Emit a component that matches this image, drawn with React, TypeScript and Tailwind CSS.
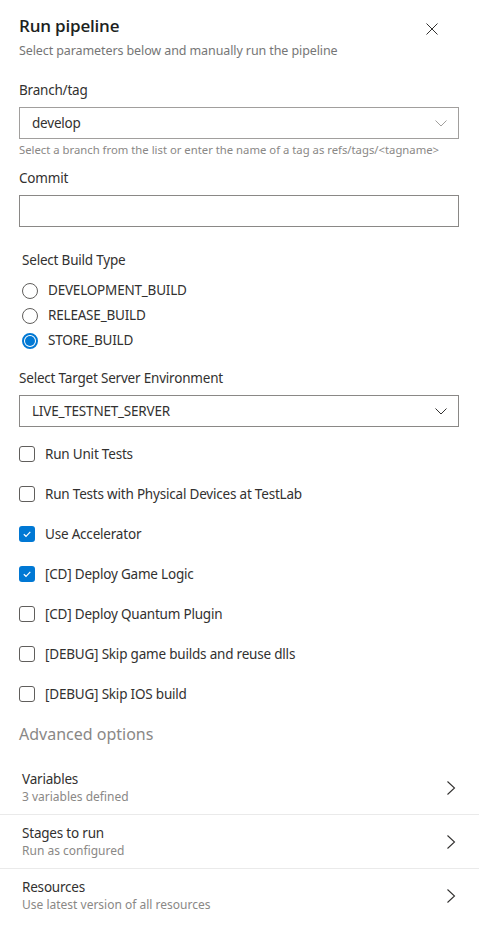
import React from "react";

const font = { fontFamily: '"Noto Sans", "Open Sans", sans-serif' };

function Checkbox({ checked, label }: { checked?: boolean; label: string }) {
  return (
    <div className="flex items-center h-10">
      {checked ? (
        <div className="w-4 h-4 rounded-[3px] bg-[#0078d4] flex items-center justify-center">
          <svg width="10" height="10" viewBox="0 0 10 10">
            <path d="M1.8 5.2 L4 7.3 L8.3 2.8" fill="none" stroke="white" strokeWidth="1.2" />
          </svg>
        </div>
      ) : (
        <div className="w-4 h-4 rounded-[3px] border border-[#605e5c] bg-white" />
      )}
      <span className="ml-[10px] text-[13.5px] tracking-[-0.2px] text-[#323130]">{label}</span>
    </div>
  );
}

function Radio({ checked, label }: { checked?: boolean; label: string }) {
  return (
    <div className="flex items-center h-[25px]">
      {checked ? (
        <div className="w-4 h-4 rounded-full border-2 border-[#0078d4] flex items-center justify-center">
          <div className="w-[10px] h-[10px] rounded-full bg-[#0078d4]" />
        </div>
      ) : (
        <div className="w-4 h-4 rounded-full border border-[#605e5c]" />
      )}
      <span className="ml-[10px] text-[13.5px] tracking-[-0.2px] text-[#323130]">{label}</span>
    </div>
  );
}

function Row({ title, sub, last }: { title: string; sub: string; last?: boolean }) {
  return (
    <div className={`flex items-center justify-between h-[54px] pl-[22px] pr-[23px] ${last ? "" : "border-b border-[#eaeaea]"}`}>
      <div className="flex flex-col">
        <span className="text-[13.5px] tracking-[-0.2px] leading-[18px] text-[#323130]">{title}</span>
        <span className="text-[12px] leading-[18px] text-[#8a8886]">{sub}</span>
      </div>
      <svg width="10" height="16" viewBox="0 0 10 16">
        <path d="M1.5 1.5 L8.5 8 L1.5 14.5" fill="none" stroke="#323130" strokeWidth="1.1" />
      </svg>
    </div>
  );
}

export default function App() {
  return (
    <div className="w-[479px] h-[937px] bg-white overflow-hidden" style={font}>
      <div className="pl-[19px] pr-[20px]">
        <div className="flex justify-between pt-[14px]">
          <div>
            <div
              className="text-[17px] leading-[24px] font-semibold tracking-[-0.2px] text-[#201f1e]"
              style={{ fontFamily: '"Open Sans", "Noto Sans", sans-serif' }}
            >
              Run pipeline
            </div>
            <div className="text-[12.5px] leading-[18px] tracking-[-0.1px] text-[#767676] mt-[4px]">
              Select parameters below and manually run the pipeline
            </div>
          </div>
          <svg width="12" height="12" viewBox="0 0 12 12" className="mt-[9px] mr-[21px]">
            <path d="M0.5 0.5 L11.5 11.5 M11.5 0.5 L0.5 11.5" stroke="#323130" strokeWidth="1" />
          </svg>
        </div>

        <div className="text-[13.5px] tracking-[-0.2px] leading-[20px] text-[#323130] mt-[20px]">Branch/tag</div>
        <div className="mt-[7px] h-[32px] border border-[#a19f9d] flex items-center justify-between pl-[12px] pr-[11px]">
          <span className="text-[13.5px] tracking-[-0.2px] text-[#323130]">develop</span>
          <svg width="12" height="7" viewBox="0 0 12 7">
            <path d="M0.5 0.5 L6 6 L11.5 0.5" fill="none" stroke="#a19f9d" strokeWidth="1" />
          </svg>
        </div>
        <div className="text-[11.3px] leading-[16px] text-[#8a8886] mt-[3px] whitespace-nowrap">
          Select a branch from the list or enter the name of a tag as refs/tags/&lt;tagname&gt;
        </div>

        <div className="text-[13.5px] tracking-[-0.2px] leading-[20px] text-[#323130] mt-[10px]">Commit</div>
        <div className="mt-[7px] h-[32px] border border-[#8a8886]" />

        <div className="pl-[3px] mt-[23px]">
          <div className="text-[13.5px] tracking-[-0.2px] leading-[20px] text-[#323130]">Select Build Type</div>
          <div className="mt-[8px]">
            <Radio label="DEVELOPMENT_BUILD" />
            <Radio label="RELEASE_BUILD" />
            <Radio checked label="STORE_BUILD" />
          </div>
        </div>

        <div className="text-[13.5px] tracking-[-0.2px] leading-[20px] text-[#323130] mt-[15px]">Select Target Server Environment</div>
        <div className="mt-[7px] h-[32px] border border-[#8a8886] flex items-center justify-between pl-[12px] pr-[11px]">
          <span className="text-[13.5px] tracking-[-0.2px] text-[#323130]">LIVE_TESTNET_SERVER</span>
          <svg width="12" height="7" viewBox="0 0 12 7">
            <path d="M0.5 0.5 L6 6 L11.5 0.5" fill="none" stroke="#323130" strokeWidth="1" />
          </svg>
        </div>

        <div className="mt-[7px]">
          <Checkbox label="Run Unit Tests" />
          <Checkbox label="Run Tests with Physical Devices at TestLab" />
          <Checkbox checked label="Use Accelerator" />
          <Checkbox checked label="[CD] Deploy Game Logic" />
          <Checkbox label="[CD] Deploy Quantum Plugin" />
          <Checkbox label="[DEBUG] Skip game builds and reuse dlls" />
          <Checkbox label="[DEBUG] Skip IOS build" />
        </div>

        <div className="text-[16px] leading-[24px] text-[#8a8886] mt-[8px]">Advanced options</div>
      </div>

      <div className="mt-[15px]">
        <Row title="Variables" sub="3 variables defined" />
        <Row title="Stages to run" sub="Run as configured" />
        <Row title="Resources" sub="Use latest version of all resources" last />
      </div>
    </div>
  );
}
